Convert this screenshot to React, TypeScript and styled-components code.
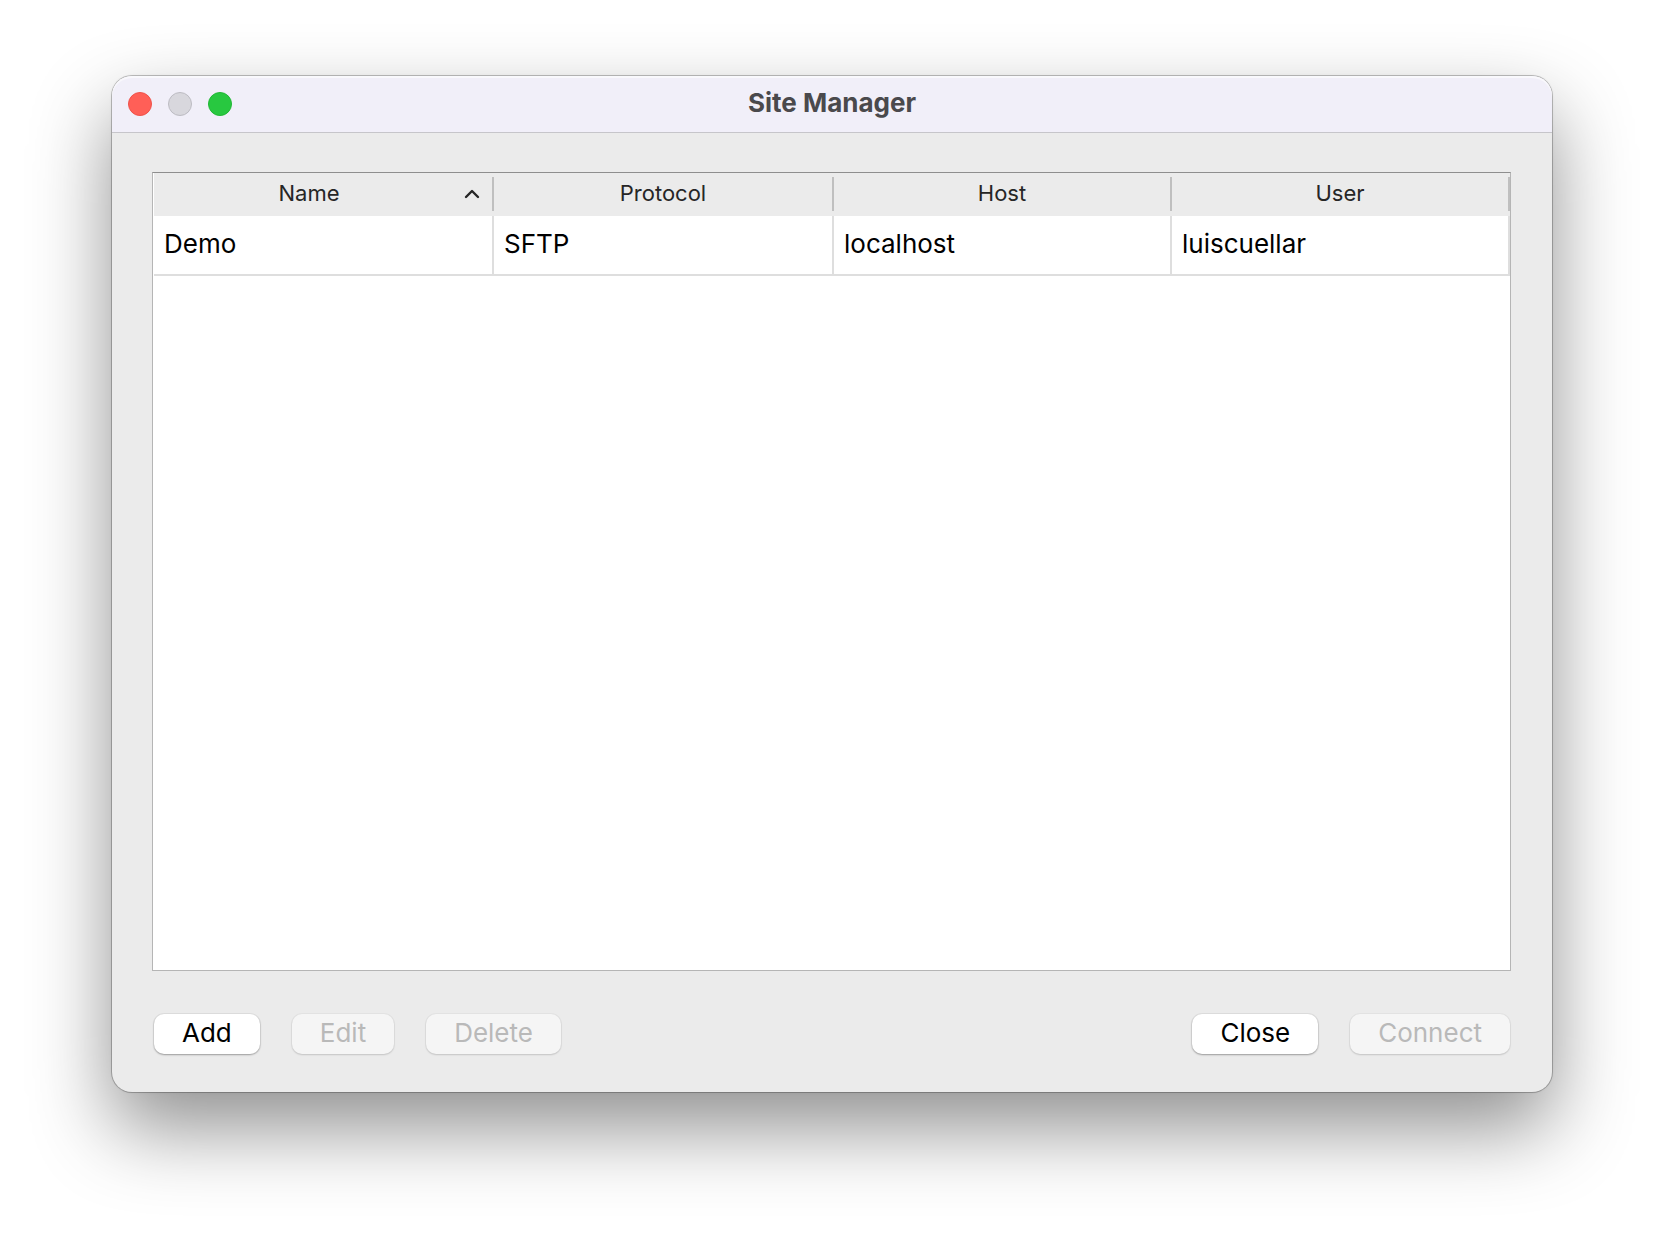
import React, { useState } from "react";
import styled, { createGlobalStyle } from "styled-components";

const GlobalStyle = createGlobalStyle`
  *, *::before, *::after { box-sizing: border-box; }
  body {
    margin: 0;
    background: #ffffff;
    font-family: Inter, Roboto, "Liberation Sans", sans-serif;
    color: #000000;
  }
  button { font: inherit; }
`;

const Desktop = styled.div`
  display: flex;
  min-height: 100vh;
  padding: 76px 112px 148px;
  overflow: hidden;
`;

const Window = styled.main`
  flex: 1;
  min-width: 0;
  display: flex;
  flex-direction: column;
  border-radius: 20px;
  background: #ebebeb;
  box-shadow:
    0 0 0 1px rgba(0, 0, 0, 0.22),
    0 0 3px rgba(0, 0, 0, 0.1),
    0 36px 80px rgba(0, 0, 0, 0.44);
`;

const TitleBar = styled.header`
  display: grid;
  grid-template-columns: 1fr auto 1fr;
  align-items: center;
  height: 57px;
  padding: 0 16px;
  background: #f1eff9;
  border-bottom: 1px solid #c6c5ca;
  border-radius: 20px 20px 0 0;
  box-shadow: inset 0 2px 1px rgba(255, 255, 255, 0.6);
`;

const WindowControls = styled.div`
  display: flex;
  gap: 16px;
`;

const Light = styled.button<{ $fill: string; $edge: string }>`
  width: 24px;
  height: 24px;
  padding: 0;
  border: 1px solid ${(p) => p.$edge};
  border-radius: 50%;
  background: ${(p) => p.$fill};
`;

const Title = styled.h1`
  margin: 0;
  padding-bottom: 2px;
  font-size: 26px;
  line-height: 32px;
  font-weight: 700;
  color: #4a494c;
`;

const Content = styled.div`
  flex: 1;
  display: flex;
  flex-direction: column;
  gap: 43px;
  padding: 39px 41px 38px 40px;
`;

const TableFrame = styled.div`
  flex: 1;
  padding-left: 1px;
  background: #ffffff;
  border: 1px solid #b5b5b5;
  border-top-color: #8e8e8e;
`;

const SiteTable = styled.table`
  width: 100%;
  table-layout: fixed;
  border-collapse: separate;
  border-spacing: 0;
`;

const FixedColumn = styled.col`
  width: 340px;
`;

const HeaderCell = styled.th`
  padding: 4px 0 5px;
  background: #ebebeb;
  font-weight: 400;
`;

const HeaderButton = styled.button`
  display: flex;
  align-items: center;
  width: 100%;
  height: 34px;
  padding: 0;
  border: 0;
  border-right: 2px solid #bfbfbf;
  background: transparent;
  font-size: 22px;
  line-height: 32px;
  color: #262626;
`;

const HeaderLabel = styled.span`
  flex: 1;
  padding-bottom: 2px;
  text-align: center;
`;

const SortArrow = styled.svg<{ $descending: boolean }>`
  width: 16px;
  height: 10px;
  margin-right: 12px;
  transform: ${(p) => (p.$descending ? "rotate(180deg)" : "none")};
`;

const Cell = styled.td`
  height: 60px;
  padding: 0 10px 2px;
  border-right: 2px solid #dedede;
  border-bottom: 2px solid #dedede;
  font-size: 26px;
  line-height: 32px;
`;

const Actions = styled.footer`
  display: flex;
  justify-content: space-between;
  padding: 0 1px 0 2px;
`;

const ActionGroup = styled.div`
  display: flex;
  gap: 32px;
`;

const PushButton = styled.button`
  height: 40px;
  padding: 0 28px 2px;
  border: 0;
  border-radius: 10px;
  background: #ffffff;
  font-size: 26px;
  line-height: 32px;
  color: #000000;
  box-shadow: 0 0 0 1px rgba(0, 0, 0, 0.05), 0 1px 2px rgba(0, 0, 0, 0.3);

  &:disabled {
    background: #f5f5f5;
    color: #b9b9b9;
    box-shadow: 0 0 0 1px rgba(0, 0, 0, 0.03), 0 1px 2px rgba(0, 0, 0, 0.14);
  }
`;

type Site = { name: string; protocol: string; host: string; user: string };

const columns: { key: keyof Site; label: string }[] = [
  { key: "name", label: "Name" },
  { key: "protocol", label: "Protocol" },
  { key: "host", label: "Host" },
  { key: "user", label: "User" },
];

const sites: Site[] = [
  { name: "Demo", protocol: "SFTP", host: "localhost", user: "luiscuellar" },
];

export default function App() {
  const [sortKey, setSortKey] = useState<keyof Site>("name");
  const [descending, setDescending] = useState(false);

  const sortBy = (key: keyof Site) => {
    setDescending(key === sortKey ? !descending : false);
    setSortKey(key);
  };

  const rows = [...sites].sort(
    (a, b) => a[sortKey].localeCompare(b[sortKey]) * (descending ? -1 : 1)
  );

  return (
    <>
      <GlobalStyle />
      <Desktop>
        <Window>
          <TitleBar>
            <WindowControls>
              <Light type="button" aria-label="Close window" $fill="#ff5f57" $edge="#f0524a" />
              <Light type="button" aria-label="Minimize window" disabled $fill="#d8d7dd" $edge="#bdbcc3" />
              <Light type="button" aria-label="Zoom window" $fill="#28c840" $edge="#20b834" />
            </WindowControls>
            <Title>Site Manager</Title>
          </TitleBar>
          <Content>
            <TableFrame>
              <SiteTable aria-label="Sites">
                <colgroup>
                  <FixedColumn />
                  <FixedColumn />
                  <col />
                  <col />
                </colgroup>
                <thead>
                  <tr>
                    {columns.map(({ key, label }) => (
                      <HeaderCell key={key} scope="col">
                        <HeaderButton type="button" onClick={() => sortBy(key)}>
                          <HeaderLabel>{label}</HeaderLabel>
                          {key === sortKey && (
                            <SortArrow $descending={descending} viewBox="0 0 16 10" aria-hidden="true">
                              <path
                                d="M2 8 L8 2 L14 8"
                                fill="none"
                                stroke="#262626"
                                strokeWidth="2.4"
                                strokeLinecap="round"
                                strokeLinejoin="round"
                              />
                            </SortArrow>
                          )}
                        </HeaderButton>
                      </HeaderCell>
                    ))}
                  </tr>
                </thead>
                <tbody>
                  {rows.map((site) => (
                    <tr key={site.name}>
                      {columns.map(({ key }) => (
                        <Cell key={key}>{site[key]}</Cell>
                      ))}
                    </tr>
                  ))}
                </tbody>
              </SiteTable>
            </TableFrame>
            <Actions>
              <ActionGroup>
                <PushButton type="button">Add</PushButton>
                <PushButton type="button" disabled>Edit</PushButton>
                <PushButton type="button" disabled>Delete</PushButton>
              </ActionGroup>
              <ActionGroup>
                <PushButton type="button">Close</PushButton>
                <PushButton type="button" disabled>Connect</PushButton>
              </ActionGroup>
            </Actions>
          </Content>
        </Window>
      </Desktop>
    </>
  );
}
